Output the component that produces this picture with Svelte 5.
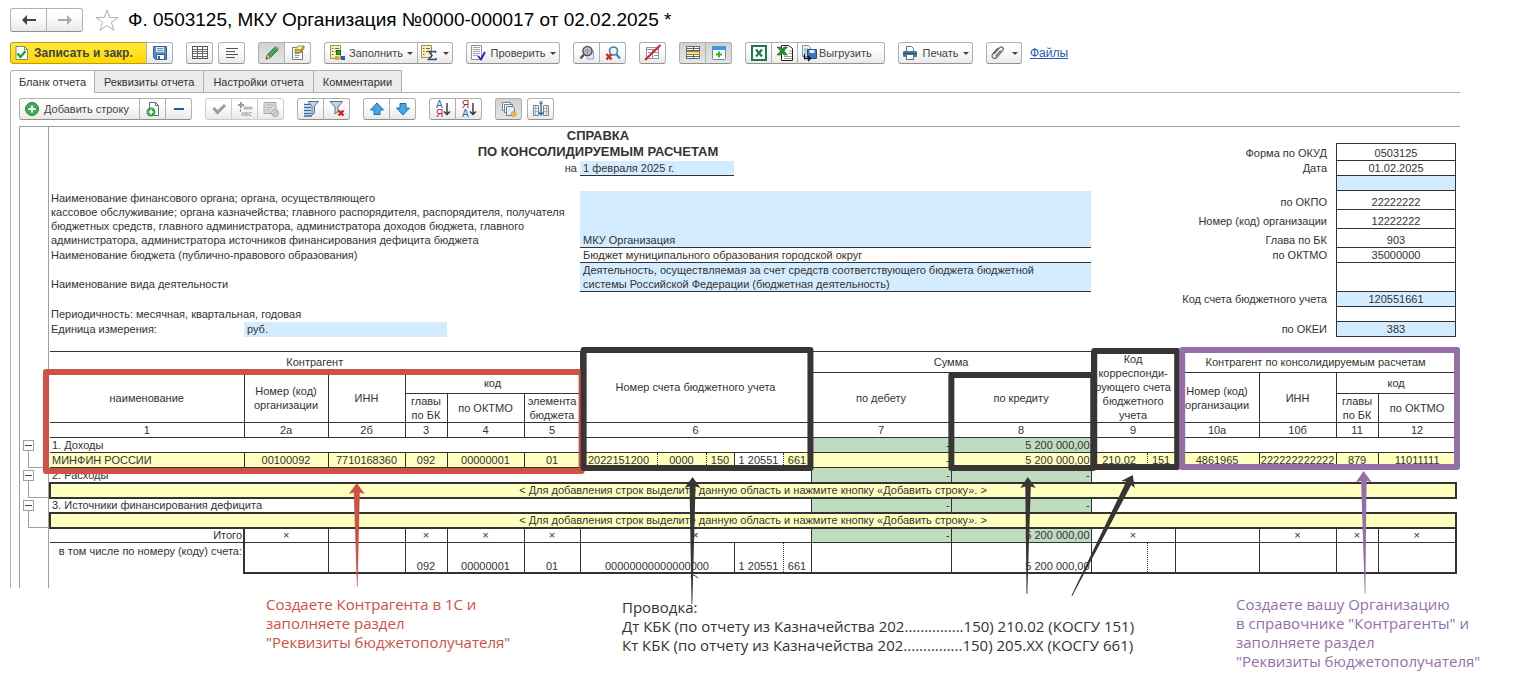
<script>
	const title = 'Ф. 0503125, МКУ Организация №0000-000017 от 02.02.2025 *';

	const tabs = ['Бланк отчета', 'Реквизиты отчета', 'Настройки отчета', 'Комментарии'];
	let activeTab = $state(0);

	const mainGroups = [
		[
			{ icon: 'accept', label: 'Записать и закр.', kind: 'primary' },
			{ icon: 'save', title: 'Записать' }
		],
		[{ icon: 'grid', title: 'Таблица' }],
		[{ icon: 'lines', title: 'Текст', near: true }],
		[
			{ icon: 'pencil', title: 'Редактирование', pressed: true },
			{ icon: 'erase', title: 'Очистить' }
		],
		[
			{ icon: 'fill', label: 'Заполнить', menu: true },
			{ icon: 'sigma', title: 'Расчет', menu: true }
		],
		[{ icon: 'check', label: 'Проверить', menu: true }],
		[
			{ icon: 'find', title: 'Найти' },
			{ icon: 'findoff', title: 'Отменить поиск' }
		],
		[{ icon: 'nosheet', title: 'Скрыть' }],
		[
			{ icon: 'panel', title: 'Панель', pressed: true },
			{ icon: 'addwin', title: 'Новое окно', pressed: true }
		],
		[
			{ icon: 'excel', title: 'Excel' },
			{ icon: 'excelold', title: 'Excel 97' },
			{ icon: 'export', label: 'Выгрузить', kind: 'export' }
		],
		[{ icon: 'print', label: 'Печать', menu: true, kind: 'print' }],
		[{ icon: 'clip', title: 'Файлы', menu: true }]
	];

	const sheetGroups = [
		[
			{ icon: 'add', label: 'Добавить строку', kind: 'add' },
			{ icon: 'addpage', title: 'Добавить лист' },
			{ icon: 'minus', title: 'Удалить строку' }
		],
		[
			{ icon: 'tick', title: 'Принять', disabled: true },
			{ icon: 'abc', title: 'Имя', disabled: true },
			{ icon: 'deny', title: 'Запретить', disabled: true }
		],
		[
			{ icon: 'filter', title: 'Отбор' },
			{ icon: 'filteroff', title: 'Снять отбор' }
		],
		[
			{ icon: 'up', title: 'Вверх' },
			{ icon: 'down', title: 'Вниз' }
		],
		[
			{ icon: 'az', title: 'По возрастанию' },
			{ icon: 'za', title: 'По убыванию' }
		],
		[{ icon: 'copy', title: 'Копировать', pressed: true }],
		[{ icon: 'fit', title: 'Ширина колонок', near: true }]
	];

	const codes = [
		{ label: 'Форма по ОКУД', value: '0503125' },
		{ label: 'Дата', value: '01.02.2025' },
		{ label: '', value: '', edit: true },
		{ label: 'по ОКПО', value: '22222222' },
		{ label: 'Номер (код) организации', value: '12222222' },
		{ label: 'Глава по БК', value: '903' },
		{ label: 'по ОКТМО', value: '35000000' },
		{ label: '', value: '' },
		{ label: 'Код счета бюджетного учета', value: '120551661', edit: true },
		{ label: '', value: '' },
		{ label: 'по ОКЕИ', value: '383', edit: true }
	];

	const cols = [194, 84, 77, 42, 77, 56, 77, 49, 28, 49, 28, 140, 140, 56, 28, 84, 77, 42, 78];

	const hint = '< Для добавления строк выделите данную область и нажмите кнопку «Добавить строку». >';
</script>

{#snippet icon(name)}
	<svg class="icon" viewBox="0 0 16 16" width="16" height="16" aria-hidden="true">
		{#if name === 'accept'}
			<path d="M2 1.500h8.500l3 3v10H2z" fill="#fff" stroke="#7d8a80" />
			<path d="M10.500 1.500v3h3" fill="none" stroke="#7d8a80" />
			<path d="M3.500 8.500l3 3.500 5-6" fill="none" stroke="#1ca533" stroke-width="2.400" />
		{:else if name === 'save'}
			<path d="M1.500 1.500h13v13h-11l-2-2z" fill="#5b8fc4" stroke="#2f6299" />
			<rect x="4" y="2" width="8" height="5" fill="#e6eef7" />
			<path d="M5 3.500h6M5 5.500h6" stroke="#5b8fc4" />
			<rect x="4.500" y="9.500" width="8" height="5" fill="#fff" stroke="#2f6299" />
			<rect x="6" y="11" width="2" height="3" fill="#2f6299" />
		{:else if name === 'grid'}
			<rect x="0.500" y="1.500" width="15" height="12" fill="#fff" stroke="#555" />
			<path d="M0 4.500h16M0 6.500h16M0 8.500h16M0 11.500h16M5.500 1v13M10.500 1v13" stroke="#666" />
		{:else if name === 'lines'}
			<path d="M2 3.500h12M2 6.500h9M2 9.500h12M2 12.500h9" stroke="#555" />
		{:else if name === 'pencil'}
			<path d="M2 14l1.500-4.500L11 2l3 3-7.500 7.500z" fill="#3fa75c" stroke="#2b6b3c" stroke-width=".8" />
			<path d="M2 14l1.500-4.500 3 3z" fill="#eec08c" stroke="#8a6039" stroke-width=".6" />
			<path d="M11 2l1.500-1 2.500 2.500L14 5z" fill="#e08a4a" />
			<path d="M2 14l.6-1.800 1.200 1.200z" fill="#333" />
		{:else if name === 'erase'}
			<path d="M2.500 2.500h10v12h-10z" fill="#fff" stroke="#6f7b88" />
			<path d="M4.500 8.500h5M4.500 10.500h5M4.500 12.500h4" stroke="#8a95a0" />
			<path d="M5 5l3-4h6l-3 4z" fill="#fff3a8" stroke="#8a7a1c" stroke-width=".8" />
			<path d="M5 5h6v2.500H5zM11 5l3-4v2.500l-3 4z" fill="#e0c43c" stroke="#8a7a1c" stroke-width=".8" />
		{:else if name === 'fill'}
			<path d="M1.500 .5h10v13h-10z" fill="#f7efc4" stroke="#a08d50" />
			<path d="M3 3.500h1.500M3 6.500h1.500M3 9.500h1.500M6 3.500h4M6 6.500h1" stroke="#7a6a38" />
			<rect x="7.500" y="5.500" width="4" height="4" fill="#2aa336" stroke="#17691f" />
			<rect x="6" y="11" width="4" height="4" fill="#f0a422" />
			<rect x="12" y="11" width="4" height="4" fill="#2261b8" />
		{:else if name === 'sigma'}
			<path d="M.5 .5h10v12h-10z" fill="#f7efc4" stroke="#a08d50" />
			<path d="M2 3.500h1.500M2 6.500h1.500M2 9.500h1.500M5 3.500h4M5 6.500h2" stroke="#7a6a38" />
			<path d="M14.500 8V6.500H8l3 4-3.500 4h7.500V13" fill="none" stroke="#2f4d70" stroke-width="1.500" />
		{:else if name === 'check'}
			<path d="M1.500 .5h10v14h-10z" fill="#fff" stroke="#8b93a0" />
			<path d="M3 2.500h7M3 4.500h7M3 6.500h7M3 8.500h7M3 10.500h5" stroke="#9aa3b4" />
			<path d="M8 11l3 3.500L15 7" fill="none" stroke="#1a1ae0" stroke-width="1.800" />
		{:else if name === 'find'}
			<path d="M8 6h6.500v8H8z" fill="#e4eaf0" stroke="#9aa6b2" />
			<circle cx="8.500" cy="6" r="4.500" fill="#c3ccd6" stroke="#555" stroke-width="1.600" />
			<path d="M5.500 5h6M5.500 7h6M8.500 3v6" stroke="#8391a0" stroke-width=".8" />
			<path d="M5 9.500l-3.500 4" stroke="#555" stroke-width="2.400" />
		{:else if name === 'findoff'}
			<circle cx="8.500" cy="6" r="4" fill="#eaf5fc" stroke="#3d80b3" stroke-width="1.600" />
			<path d="M11 9l4 4.500" stroke="#3d80b3" stroke-width="2.200" />
			<path d="M1.500 9l5 5.500M6.500 9l-5 5.500" stroke="#d8201c" stroke-width="2.400" />
		{:else if name === 'nosheet'}
			<path d="M1.500 2.500h12v11h-12z" fill="#fff" stroke="#8a96a3" />
			<path d="M1.500 4.500h12M7.500 4v9M9 7.500h4M9 10.500h4M3 7.500h3" stroke="#8a96a3" />
			<path d="M0 15L15.500 0" stroke="#e01b1b" stroke-width="2" />
		{:else if name === 'panel'}
			<path d="M1.500 1.500h13v12h-13z" fill="#fff" stroke="#51677c" />
			<path d="M1 3.500h14M8.500 1v5M1 5.500h14M1 11.500h14M8.500 10v4" stroke="#51677c" />
			<rect x="1.500" y="6.500" width="13" height="3" fill="#fbdc7c" stroke="#a58322" />
		{:else if name === 'addwin'}
			<rect x="1.500" y="1.500" width="13" height="13" rx="1" fill="#fff" stroke="#6f8aa5" />
			<rect x="1" y="1" width="14" height="4" fill="#3a9bdc" />
			<path d="M8 6.500v6M5 9.500h6" stroke="#44b31a" stroke-width="2" />
		{:else if name === 'excel'}
			<rect x="1" y="1" width="14" height="14" fill="#fff" stroke="#1e7a48" stroke-width="2" />
			<path d="M5 4.500l6 7M11 4.500l-6 7" stroke="#1e7a48" stroke-width="2.200" />
		{:else if name === 'excelold'}
			<path d="M4.500 .5h7l4 3v12h-11z" fill="#fff" stroke="#222" />
			<path d="M12 6h3M12 8.500h3M7 11.500h8M7 13.500h8" stroke="#999" />
			<path d="M0 2h3.500l7 8H7zM7 2h3.500l-7 8H0z" fill="#2d9b33" stroke="#14601a" stroke-width=".6" />
		{:else if name === 'export'}
			<path d="M1.500 .5h6l2 2v9h-8z" fill="#e5eef6" stroke="#8097ab" />
			<path d="M3 4h4M3 6h4M3 8h3" stroke="#88a0b6" />
			<path d="M6.500 4.500h9v9h-9z" fill="#3b76bd" stroke="#24518c" />
			<path d="M8.500 5h5v3h-5z" fill="#e8f0f9" />
			<path d="M3.500 9v4.500h5M7 11l2.500 2.500L7 16" fill="none" stroke="#111" stroke-width="1.400" />
		{:else if name === 'print'}
			<path d="M4.500 6V1.500h5l2 2V6" fill="#fff" stroke="#5b7389" />
			<rect x="1" y="6" width="14" height="6" rx="1" fill="#4278a4" />
			<path d="M1 8.500h14" stroke="#28557c" />
			<rect x="4.500" y="9.500" width="7" height="5" fill="#fff" stroke="#5b7389" />
		{:else if name === 'clip'}
			<path
				d="M4 9l5.500-6.200c2-2 5 .2 3.300 2.600L7 12.200c-2.700 3-6.600-.2-4.200-3.200L8 3M5.500 11.500l5.300-6.200"
				fill="none"
				stroke="#666"
				stroke-width="1.200"
			/>
		{:else if name === 'add'}
			<circle cx="8" cy="8" r="6.500" fill="#3cb054" stroke="#248339" />
			<path d="M8 4.500v7M4.500 8h7" stroke="#fff" stroke-width="2" />
		{:else if name === 'addpage'}
			<path d="M4.500 1.500h6l3 3v10h-9z" fill="#fff" stroke="#5d6e7e" />
			<path d="M10.500 1.500v3h3" fill="none" stroke="#5d6e7e" />
			<circle cx="6" cy="11" r="4.500" fill="#2ca346" />
			<path d="M6 8.500v5M3.500 11h5" stroke="#fff" stroke-width="1.600" />
		{:else if name === 'minus'}
			<path d="M3 8h10" stroke="#0f5fb4" stroke-width="2" />
		{:else if name === 'tick'}
			<path d="M2.500 7l4 4.500L14 4" fill="none" stroke="#a39797" stroke-width="3" />
		{:else if name === 'abc'}
			<path d="M1 4h6M4 1v6" stroke="#8fa396" stroke-width="2" />
			<path d="M6.500 5.500h9v3h-9z" fill="#b5bcc2" />
			<path d="M3.500 8v3" stroke="#999" />
			<text x="4" y="15" class="abc">ABC</text>
		{:else if name === 'deny'}
			<path d="M1 1.500h12v11H1z" fill="#d8dadc" stroke="#a4a8ac" />
			<path d="M3 4h8M3 6.500h6M3 9h4" stroke="#b2b5b8" />
			<circle cx="12" cy="12" r="3.500" fill="#d6d1cb" stroke="#b0a79b" />
			<path d="M9.500 14.500l5-5" stroke="#b0a79b" />
		{:else if name === 'filter'}
			<path d="M1 3.500h7M1 6.500h7M1 9.500h7M1 12.500h7M1 15h8" stroke="#2c6ea8" stroke-width="1.600" />
			<path d="M5 .5h10.500l-4 4.500v7L9 14V5z" fill="#c4d6e4" stroke="#5b7387" />
		{:else if name === 'filteroff'}
			<path d="M1 .5h12.500L9 6v5L6 13V6z" fill="#c4d6e4" stroke="#5b7387" />
			<path d="M9.500 9.500l5 5M14.500 9.500l-5 5" stroke="#d8201c" stroke-width="2.400" />
		{:else if name === 'up'}
			<path d="M8 2l6.500 7H11v4.500H5V9H1.500z" fill="#42a9e6" stroke="#1f6fa6" />
		{:else if name === 'down'}
			<path d="M8 14l6.500-7H11V2.500H5V7H1.500z" fill="#42a9e6" stroke="#1f6fa6" />
		{:else if name === 'az' || name === 'za'}
			<text x="1" y="7" class={name === 'az' ? 'blue' : 'red'}>{name === 'az' ? 'А' : 'Я'}</text>
			<text x="1" y="16" class={name === 'az' ? 'red' : 'blue'}>{name === 'az' ? 'Я' : 'А'}</text>
			<path d="M12 2v11M9 10.500l3 3 3-3" fill="none" stroke="#333" stroke-width="1.400" />
		{:else if name === 'copy'}
			<path d="M1.500 1.500h8v8h-8z" fill="#fff" stroke="#6b8297" />
			<path d="M3.500 3.500h8v8h-8z" fill="#fff" stroke="#6b8297" />
			<path d="M5.500 5.500h6l2 2v7h-8z" fill="#e7f0f7" stroke="#6b8297" />
			<circle cx="12.500" cy="13" r="2.500" fill="#f2bf3a" stroke="#b98817" stroke-width=".6" />
		{:else if name === 'fit'}
			<path d="M.5 4.500h5v10h-5zM10.500 4.500h5v10h-5z" fill="#e7edf2" stroke="#7b8894" />
			<path d="M2.500 5v9M13.500 5v9M1 7.500h4M11 7.500h4M1 10.500h4M11 10.500h4" stroke="#a9b4be" />
			<path d="M8 1v13M6 11.500L8 14l2-2.500" fill="none" stroke="#2f6aa3" stroke-width="1.400" />
			<path d="M6 0l4 3M10 0L6 3" stroke="#2f6aa3" stroke-width=".8" />
		{/if}
	</svg>
{/snippet}

{#snippet toolbar(groups)}
	{#each groups as group}
		<div class="group" class:near={group[0].near}>
			{#each group as b}
				<button
					type="button"
					class={['btn', b.kind, b.label && 'wide', b.menu && 'menu', b.pressed && 'pressed']}
					disabled={b.disabled}
					title={b.title}
					aria-label={b.label ?? b.title}
				>
					{@render icon(b.icon)}
					{#if b.label}<span>{b.label}</span>{/if}
					{#if b.menu}<i class="caret"></i>{/if}
				</button>
			{/each}
		</div>
	{/each}
{/snippet}

<main>
	<header class="titlebar">
		<div class="group nav">
			<button type="button" class="btn" aria-label="Назад">
				<svg viewBox="0 0 16 12" width="16" height="12"><path d="M1 6l5-5v4h9v2H6v4z" fill="#444" /></svg>
			</button>
			<button type="button" class="btn" aria-label="Вперед">
				<svg viewBox="0 0 16 12" width="16" height="12"><path d="M15 6l-5-5v4H1v2h9v4z" fill="#aaa" /></svg>
			</button>
		</div>
		<button type="button" class="star" aria-label="В избранное">
			<svg viewBox="0 0 24 22" width="24" height="22">
				<path
					d="M12 1l2.700 7.500H23l-6.600 4.800 2.500 8L12 16.500l-6.900 4.800 2.500-8L1 8.500h8.300z"
					fill="#fff"
					stroke="#a9b1ba"
				/>
			</svg>
		</button>
		<h1>{title}</h1>
	</header>

	<div class="toolbar">
		{@render toolbar(mainGroups)}
		<a class="files" href="#files">Файлы</a>
	</div>

	<div class="tabs" role="tablist">
		{#each tabs as tab, i}
			<button
				type="button"
				role="tab"
				class="tab"
				class:active={activeTab === i}
				aria-selected={activeTab === i}
				onclick={() => (activeTab = i)}>{tab}</button
			>
		{/each}
	</div>

	<section class="panel">
		<div class="toolbar inner">
			{@render toolbar(sheetGroups)}
		</div>

		<div class="sheet">
			<div class="gutter">
				{#each [1, 2, 3] as g}
					<div class="branch">
						<button type="button" class="fold" aria-label="Свернуть раздел {g}"></button>
					</div>
				{/each}
			</div>

			<div class="page">
				<div class="form">
					<h2 class="heading r1">СПРАВКА</h2>
					<h2 class="heading r2">ПО КОНСОЛИДИРУЕМЫМ РАСЧЕТАМ</h2>
					<label class="on" for="date">на</label>
					<input id="date" class="field date" value="1 февраля 2025 г." />

					<label class="lbl org-label" for="org">
						Наименование финансового органа; органа, осуществляющего<br />
						кассовое обслуживание; органа казначейства; главного распорядителя, распорядителя, получателя<br />
						бюджетных средств, главного администратора, администратора доходов бюджета, главного<br />
						администратора, администратора источников финансирования дефицита бюджета
					</label>
					<textarea id="org" class="field org" value="МКУ Организация"></textarea>
					<div class="lbl budget-label">Наименование бюджета (публично-правового образования)</div>
					<div class="budget">Бюджет муниципального образования городской округ</div>
					<label class="lbl activity-label" for="activity">Наименование вида деятельности</label>
					<textarea
						id="activity"
						class="field activity"
						value={'Деятельность, осуществляемая за счет средств соответствующего бюджета бюджетной\nсистемы Российской Федерации (бюджетная деятельность)'}
					></textarea>
					<div class="lbl period">Периодичность: месячная, квартальная, годовая</div>
					<label class="lbl unit-label" for="unit">Единица измерения:</label>
					<input id="unit" class="field unit" value="руб." />

					<div class="codes">
						{#each codes as c, i}
							<label for="code{i}">{c.label}</label>
							{#if c.edit}
								<input id="code{i}" value={c.value} aria-label={c.label || 'Код'} />
							{:else}
								<output id="code{i}">{c.value}</output>
							{/if}
						{/each}
					</div>
				</div>

				<table>
					<colgroup>
						{#each cols as w}<col style="width: {w}px" />{/each}
					</colgroup>
					<thead>
						<tr class="h21">
							<th colspan="6">Контрагент</th>
							<th colspan="5" rowspan="3">Номер счета бюджетного учета</th>
							<th colspan="2">Сумма</th>
							<th colspan="2" rowspan="3">Код<br />корреспонди-<br />рующего счета<br />бюджетного<br />учета</th>
							<th colspan="4">Контрагент по консолидируемым расчетам</th>
						</tr>
						<tr class="h21">
							<th rowspan="2">наименование</th>
							<th rowspan="2">Номер (код)<br />организации</th>
							<th rowspan="2">ИНН</th>
							<th colspan="3">код</th>
							<th rowspan="2">по дебету</th>
							<th rowspan="2">по кредиту</th>
							<th rowspan="2">Номер (код)<br />организации</th>
							<th rowspan="2">ИНН</th>
							<th colspan="2">код</th>
						</tr>
						<tr class="h29">
							<th>главы<br />по БК</th>
							<th>по ОКТМО</th>
							<th>элемента<br />бюджета</th>
							<th>главы<br />по БК</th>
							<th>по ОКТМО</th>
						</tr>
						<tr>
							<th>1</th><th>2а</th><th>2б</th><th>3</th><th>4</th><th>5</th>
							<th colspan="5">6</th><th>7</th><th>8</th><th colspan="2">9</th>
							<th>10а</th><th>10б</th><th>11</th><th>12</th>
						</tr>
					</thead>
					<tbody>
						<tr class="section">
							<td class="left" colspan="11">1. Доходы</td>
							<td class="sum">-</td>
							<td class="sum">5 200 000,00</td>
							<td colspan="6"></td>
						</tr>
						<tr class="entry">
							<td class="left">МИНФИН РОССИИ</td>
							<td>00100092</td>
							<td>7710168360</td>
							<td>092</td>
							<td>00000001</td>
							<td>01</td>
							<td class="dot">2022151200</td>
							<td class="dot">0000</td>
							<td>150</td>
							<td class="dot plain">1 20551</td>
							<td>661</td>
							<td class="right">-</td>
							<td class="right">5 200 000,00</td>
							<td class="dot">210.02</td>
							<td>151</td>
							<td>4861965</td>
							<td>222222222222</td>
							<td>879</td>
							<td>11011111</td>
						</tr>
						{#each ['2. Расходы', '3. Источники финансирования дефицита'] as name}
							<tr class="section">
								<td class="left" colspan="11">{name}</td>
								<td class="sum">-</td>
								<td class="sum">-</td>
								<td colspan="6"></td>
							</tr>
							<tr class="hint">
								<td colspan="19">{hint}</td>
							</tr>
						{/each}
					</tbody>
					<tfoot>
						<tr>
							<td class="right">Итого</td>
							<td class="thick">×</td>
							<td></td>
							<td>×</td>
							<td>×</td>
							<td>×</td>
							<td colspan="5">×</td>
							<td class="sum">-</td>
							<td class="sum">5 200 000,00</td>
							<td colspan="2">×</td>
							<td></td>
							<td>×</td>
							<td>×</td>
							<td class="end">×</td>
						</tr>
						<tr class="account">
							<td class="right by">в том числе по номеру (коду) счета:</td>
							<td class="thick"></td>
							<td></td>
							<td>092</td>
							<td>00000001</td>
							<td>01</td>
							<td colspan="3">00000000000000000</td>
							<td class="dot">1 20551</td>
							<td>661</td>
							<td></td>
							<td class="right">5 200 000,00</td>
							<td class="dot"></td>
							<td></td>
							<td></td>
							<td></td>
							<td></td>
							<td class="end"></td>
						</tr>
					</tfoot>
				</table>
			</div>

			<!-- marker frames and arrows laid over the table -->
			<svg class="marks" viewBox="19 127 1441 480" preserveAspectRatio="none" aria-hidden="true">
				<g fill="none" stroke-width="6" stroke-linejoin="round">
					<rect x="45" y="372" width="536" height="99" stroke="#d05145" />
					<rect x="1094" y="351" width="83" height="116" stroke="#383634" />
					<rect x="583" y="350" width="227" height="118" stroke="#383634" />
					<rect x="951" y="375" width="142" height="93" stroke="#383634" />
					<rect x="1182" y="350" width="275" height="117" stroke="#9470a9" />
				</g>
				<path fill="#d05145" d="M356 483l8 11-5-1.500L356.800 587h-.6L353 492.500l-5 1.500z" />
				<path fill="#383634" d="M692 477l8 11-5-1.500L691.800 604h-.8L689 486.500l-5 1.500z" />
				<path fill="#383634" d="M1027.500 477l8 11-5-1.500L1027 594h-.8L1025 486.500l-5 1.500z" />
				<path fill="#383634" d="M1132.500 475l2 13-3.500-3L1072 596l-.8-.5L1126 481.500l-5-.5z" />
				<path fill="#9470a9" d="M1363.500 471l8 11-5-1L1365.300 594h-.6L1361 481l-5 1z" />
				<path d="M690 577l3.500-2 4 3" fill="none" stroke="#383634" />
			</svg>
		</div>
	</section>

	<div class="notes">
		<p class="note client">
			Создаете Контрагента в 1С и<br />заполняете раздел<br />"Реквизиты бюджетополучателя"
		</p>
		<p class="note entries">
			Проводка:<br />Дт КБК (по отчету из Казначейства 202...............150) 210.02 (КОСГУ 151)<br />Кт КБК (по
			отчету из Казначейства 202...............150) 205.ХХ (КОСГУ 661)
		</p>
		<p class="note own">
			Создаете вашу Организацию<br />в справочнике "Контрагенты" и<br />заполняете раздел<br />"Реквизиты
			бюджетополучателя"
		</p>
	</div>
</main>

<style>
	:global(body) {
		background: #fff;
	}
	main {
		padding: 8px 64px 0 10px;
		font: 11px/14px 'Liberation Sans', Arial, sans-serif;
		color: #333;
		box-sizing: border-box;
	}
	button,
	input,
	textarea {
		font: inherit;
		color: inherit;
		margin: 0;
		border-radius: 0;
		box-sizing: border-box;
	}
	.titlebar {
		display: flex;
		align-items: center;
		height: 24px;
	}
	.star {
		display: flex;
		margin: 0 9px 0 12px;
		padding: 0;
		border: 0;
		background: none;
	}
	h1 {
		margin: 0;
		font-size: 19px;
		line-height: 24px;
		font-weight: normal;
		color: #000;
		white-space: nowrap;
	}

	/* toolbars */
	.toolbar {
		display: flex;
		align-items: center;
		margin-top: 10px;
		height: 22px;
	}
	.toolbar.inner {
		margin-top: 5px;
		padding-left: 8px;
	}
	.group {
		display: flex;
		flex: none;
		height: 22px;
		margin-right: 13px;
	}
	.group:has(+ .near) {
		margin-right: 5px;
	}
	.btn {
		display: flex;
		align-items: center;
		justify-content: center;
		width: 27px;
		height: 22px;
		padding: 0;
		border: 1px solid #b0b0b0;
		border-bottom-color: #909090;
		background: linear-gradient(#fff 30%, #e9e9e9);
		color: #444;
	}
	.btn + .btn {
		margin-left: -1px;
	}
	.btn:first-child {
		border-top-left-radius: 3px;
		border-bottom-left-radius: 3px;
	}
	.btn:last-child {
		border-top-right-radius: 3px;
		border-bottom-right-radius: 3px;
	}
	.btn span {
		white-space: nowrap;
	}
	.btn.wide {
		gap: 4px;
	}
	.icon {
		flex: none;
		overflow: visible;
	}
	.btn.menu {
		width: 36px;
		gap: 6px;
	}
	.btn.menu.wide {
		width: 94px;
		gap: 4px;
	}
	.btn.menu.print {
		width: 75px;
	}
	.btn.export {
		width: 88px;
		justify-content: flex-start;
		padding-left: 3px;
		gap: 2px;
	}
	.btn.add {
		width: 121px;
		justify-content: flex-start;
		padding-left: 4px;
	}
	.btn.primary {
		width: 137px;
		justify-content: flex-start;
		padding-left: 3px;
		background: linear-gradient(#ffea3c, #ffd800);
		border-color: #b59d1a;
	}
	.btn.primary span {
		font-weight: bold;
		font-size: 12px;
	}
	.btn.pressed {
		background: linear-gradient(#d2d2d2, #e4e4e4);
	}
	.btn:disabled {
		border-color: #ccc;
	}
	.caret {
		border: 3px solid transparent;
		border-top-color: #444;
		border-bottom: 0;
	}
	.nav .btn {
		width: 37px;
		height: 24px;
	}
	.nav {
		height: 24px;
		margin-right: 0;
	}
	.icon text {
		font: 10px 'Liberation Sans', Arial, sans-serif;
	}
	.icon .abc {
		font-size: 5px;
		font-weight: bold;
		fill: #999;
	}
	.icon .blue {
		fill: #1d6fb5;
	}
	.icon .red {
		fill: #b5232c;
	}
	.files {
		margin-left: -5px;
		font-size: 12px;
		color: #1e5bb8;
	}

	/* tabs */
	.tabs {
		display: flex;
		margin-top: 6px;
		height: 23px;
	}
	.tab {
		height: 22px;
		padding: 0 9px;
		border: 1px solid #b0b0b0;
		border-bottom: 0;
		background: #ebebeb;
		white-space: nowrap;
	}
	.tab + .tab {
		margin-left: -1px;
	}
	.tab.active {
		position: relative;
		height: 23px;
		padding: 0 8px;
		border-top-left-radius: 3px;
		background: #fff;
	}
	.panel {
		margin-top: -1px;
		border: 1px solid #b0b0b0;
		border-width: 1px 0 0 1px;
	}

	/* spreadsheet */
	.sheet {
		position: relative;
		display: flex;
		margin: 6px 0 0 8px;
		border: 1px solid #a0a0a0;
		border-width: 1px 0 0 1px;
	}
	.gutter {
		flex: none;
		width: 29px;
		box-sizing: border-box;
		padding-top: 313px;
		border-right: 1px solid #a0a0a0;
	}
	.branch {
		display: flex;
		flex-direction: column;
		height: 30px;
		padding-left: 3px;
	}
	.branch::after {
		content: '';
		height: 16px;
		margin-left: 5px;
		border: 1px solid #a0a0a0;
		border-width: 0 0 1px 1px;
	}
	.fold {
		flex: none;
		width: 11px;
		height: 11px;
		padding: 0;
		border: 1px solid #a0a0a0;
		background: linear-gradient(#444, #444) center / 7px 1px no-repeat;
	}
	.page {
		flex: 1;
		min-width: 0;
		padding: 1px 4px 14px 0;
	}
	.form {
		display: grid;
		grid-template-columns: 195fr 203fr 133fr 154fr 357fr 56fr 189fr 120fr;
		grid-template-rows: 16px 17px 15px 15px 57px 15px 29px 15px 15px 15px;
		padding-bottom: 14px;
	}
	.heading {
		grid-column: 1 / 7;
		margin: 0;
		font-size: 13px;
		line-height: 16px;
		text-align: center;
	}
	.r1 {
		grid-row: 1;
	}
	.r2 {
		grid-row: 2;
	}
	.on {
		grid-area: 3 / 3;
		padding-right: 3px;
		text-align: right;
	}
	.field {
		width: 100%;
		height: 100%;
		padding: 0 3px;
		border: 0;
		border-bottom: 1px solid #333;
		background: #d4ecff;
		outline: none;
		resize: none;
		overflow: hidden;
	}
	.lbl {
		padding-left: 2px;
		white-space: nowrap;
	}
	.date {
		grid-area: 3 / 4;
	}
	.org-label {
		grid-area: 5 / 1 / 6 / 4;
	}
	.org {
		grid-area: 5 / 4 / 6 / 6;
		padding-top: 42px;
	}
	.budget-label {
		grid-area: 6 / 1 / 7 / 4;
	}
	.budget {
		grid-area: 6 / 4 / 7 / 6;
		padding-left: 3px;
		border-bottom: 1px solid #333;
	}
	.activity-label {
		grid-area: 7 / 1 / 8 / 4;
		align-self: end;
		padding-bottom: 1px;
	}
	.activity {
		grid-area: 7 / 4 / 8 / 6;
	}
	.period {
		grid-area: 9 / 1 / 10 / 4;
	}
	.unit-label {
		grid-area: 10 / 1;
	}
	.unit {
		grid-area: 10 / 2;
		border-bottom-color: #d4ecff;
	}
	.codes {
		grid-area: 2 / 6 / 11 / 9;
		display: grid;
		grid-template-columns: 245fr 120fr;
		grid-template-rows: 17px 15px 15px 19px 19px 19px 15px 29px 15px 15px 15px;
	}
	.codes label {
		align-self: end;
		padding: 0 9px 1px 0;
		text-align: right;
		white-space: nowrap;
	}
	.codes input,
	.codes output {
		display: flex;
		align-items: flex-end;
		justify-content: center;
		width: 100%;
		box-sizing: border-box;
		padding: 0;
		border: 1px solid #333;
		border-top: 0;
		background: #fff;
		text-align: center;
		outline: none;
	}
	.codes output:first-of-type {
		border-top: 1px solid #333;
		margin-top: -1px;
	}
	.codes input {
		height: 100%;
		background: #d4ecff;
	}

	table {
		width: 100%;
		table-layout: fixed;
		border-collapse: collapse;
	}
	th,
	td {
		box-sizing: border-box;
		height: 15px;
		padding: 0;
		border: 1px solid #333;
		border-left: 0;
		font-weight: normal;
		text-align: center;
		white-space: nowrap;
	}
	th {
		line-height: 14px;
	}
	td {
		line-height: 12px;
	}
	.h21 th {
		height: 21px;
	}
	.h29 th {
		height: 29px;
	}
	.left {
		padding-left: 2px;
		text-align: left;
	}
	.right,
	.sum {
		padding-right: 1px;
		text-align: right;
	}
	.sum {
		background: #c0dcc0;
	}
	.section td:last-child {
		border-right: 0;
	}
	.entry td {
		background: #ffffc0;
	}
	.entry .plain {
		background: #fff;
	}
	td.dot {
		border-right: 1px dotted #333;
	}
	.hint td {
		border: 2px solid #333;
		background: #ffffc0;
	}
	td.thick {
		border-left: 2px solid #333;
	}
	td.end {
		border-right: 2px solid #333;
	}
	.account td {
		height: 30px;
		vertical-align: bottom;
		border-bottom: 2px solid #333;
	}
	.account .by {
		vertical-align: top;
		border-bottom: 0;
		padding-top: 2px;
	}
	.marks {
		position: absolute;
		top: 0;
		left: 0;
		width: 100%;
		height: 480px;
		overflow: visible;
		pointer-events: none;
	}

	/* callouts */
	.notes {
		display: grid;
		grid-template-columns: minmax(0, 356fr) minmax(0, 614fr) minmax(0, 288fr);
		margin-right: -64px;
		padding: 7px 0 0 256px;
		font: 15px/19px 'Open Sans', 'Noto Sans', sans-serif;
	}
	.note {
		margin: 0;
		white-space: nowrap;
	}
	.client {
		color: #d05145;
	}
	.entries {
		padding-top: 3px;
	}
	.own {
		color: #9470a9;
	}
</style>
